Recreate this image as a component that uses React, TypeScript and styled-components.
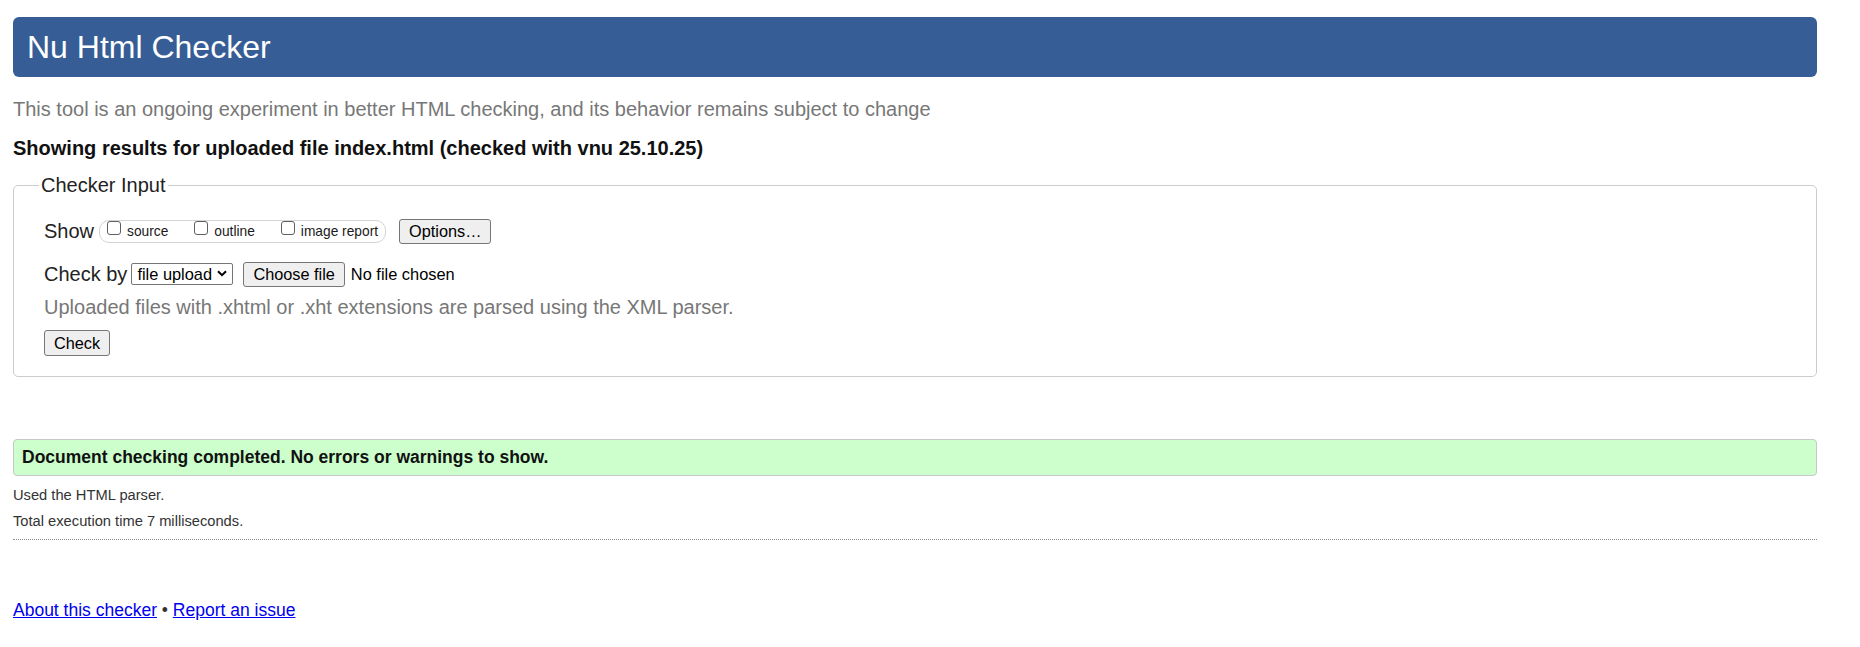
import React from 'react'
import styled, { createGlobalStyle } from 'styled-components'

const GlobalStyle = createGlobalStyle`
  html,
  body {
    margin: 0;
    background: #fff;
  }

  body {
    padding: 17px 43px 0 13px;
    font-family: 'Liberation Sans', Arial, Helvetica, sans-serif;
    color: #222;
  }
`

const Header = styled.h1`
  margin: 0;
  height: 60px;
  padding: 0 14px;
  border-radius: 6px;
  background-color: #365d95;
  color: #fff;
  font-size: 32px;
  font-weight: normal;
  line-height: 60px;
`

const Intro = styled.p`
  margin: 21px 0 0;
  font-size: 20px;
  line-height: 23px;
  color: #777;
`

const ResultsTitle = styled.h2`
  margin: 16px 0 0;
  font-size: 20px;
  font-weight: bold;
  line-height: 23px;
  color: #111;
`

const Fieldset = styled.fieldset`
  margin: 14px 0 0;
  padding: 0 24px 20px 30px;
  min-width: 0;
  border: 1px solid #ccc;
  border-radius: 5px;
  display: flex;
  flex-direction: column;
  align-items: flex-start;
`

const Legend = styled.legend`
  margin-left: -5px;
  padding: 0 2px;
  font-size: 20px;
  line-height: 23px;
  color: #222;
`

const Row = styled.div<{ top: number }>`
  display: flex;
  align-items: center;
  height: 26px;
  margin-top: ${({ top }) => top}px;
`

const RowLabel = styled.span<{ gap: number }>`
  margin-right: ${({ gap }) => gap}px;
  font-size: 20px;
  color: #222;
`

const OptionGroup = styled.div`
  display: flex;
  align-items: center;
  box-sizing: border-box;
  height: 23px;
  padding: 0 7px;
  border: 1px solid #d4d4d4;
  border-radius: 10px;
`

const Option = styled.label<{ last?: boolean }>`
  display: flex;
  align-items: center;
  align-self: stretch;
  margin-right: ${({ last }) => (last ? 0 : 26)}px;
  font-size: 13.75px;
  color: #1a1a1a;
`

const Checkbox = styled.input`
  appearance: none;
  align-self: flex-start;
  box-sizing: border-box;
  width: 14px;
  height: 14px;
  margin: 0 6px 0 0;
  border: 1px solid #5f5f5f;
  border-radius: 3px;
  background: #fff;
`

const Button = styled.button<{ height?: number }>`
  box-sizing: border-box;
  height: ${({ height }) => height ?? 25}px;
  padding: 0 9px;
  border: 1px solid #767676;
  border-radius: 3px;
  background-color: #efefef;
  color: #000;
  font-family: 'Liberation Sans', Arial, Helvetica, sans-serif;
  font-size: 16.3px;
  line-height: 1;
`

const OptionsButton = styled(Button)`
  margin-left: 13px;
`

const ChooseButton = styled(Button)`
  margin-left: 10px;
`

const CheckButton = styled(Button)`
  margin-top: 11px;
`

const SelectWrap = styled.div`
  position: relative;
  display: flex;
`

const Select = styled.select`
  appearance: none;
  box-sizing: border-box;
  width: 102px;
  height: 22px;
  padding: 0 0 0 5px;
  border: 1px solid #767676;
  border-radius: 2px;
  background-color: #fff;
  color: #000;
  font-family: 'Liberation Sans', Arial, Helvetica, sans-serif;
  font-size: 16.4px;
`

const Chevron = styled.svg`
  position: absolute;
  top: 7px;
  right: 6px;
  width: 10px;
  height: 7px;
  pointer-events: none;
`

const FileStatus = styled.span`
  margin-left: 6px;
  font-size: 16.4px;
  color: #000;
`

const Hint = styled.p`
  margin: 9px 0 0;
  font-size: 20px;
  line-height: 23px;
  color: #777;
`

const Success = styled.p`
  margin: 62px 0 0;
  padding: 7px 8px;
  border: 1px solid #c8c8c8;
  border-radius: 4px;
  background-color: #ccffcc;
  color: #111;
  font-size: 17.5px;
  font-weight: bold;
  line-height: 21px;
`

const Meta = styled.p<{ top: number }>`
  margin: ${({ top }) => top}px 0 0;
  font-size: 14.7px;
  line-height: 17px;
  color: #333;
`

const Divider = styled.hr`
  margin: 9px 0 0;
  height: 0;
  border: 0;
  border-top: 1px dotted #8a8a8a;
`

const Footer = styled.p`
  margin: 60px 0 0;
  font-size: 17.5px;
  line-height: 20px;
  color: #333;
`

const FooterLink = styled.a`
  color: #0000ee;
  text-decoration: underline;
`

export default function App() {
  return (
    <>
      <GlobalStyle />
      <Header>Nu Html Checker</Header>
      <Intro>
        This tool is an ongoing experiment in better HTML checking, and its behavior remains subject to change
      </Intro>
      <ResultsTitle>Showing results for uploaded file index.html (checked with vnu 25.10.25)</ResultsTitle>

      <Fieldset>
        <Legend>Checker Input</Legend>
        <Row top={21}>
          <RowLabel gap={5}>Show</RowLabel>
          <OptionGroup>
            <Option>
              <Checkbox type="checkbox" />
              source
            </Option>
            <Option>
              <Checkbox type="checkbox" />
              outline
            </Option>
            <Option last>
              <Checkbox type="checkbox" />
              image report
            </Option>
          </OptionGroup>
          <OptionsButton type="button">Options…</OptionsButton>
        </Row>
        <Row top={17}>
          <RowLabel gap={4}>Check by</RowLabel>
          <SelectWrap>
            <Select defaultValue="upload">
              <option value="address">address</option>
              <option value="upload">file upload</option>
              <option value="input">text input</option>
            </Select>
            <Chevron viewBox="0 0 10 7">
              <path d="M1 1.2 L5 5.2 L9 1.2" fill="none" stroke="#000" strokeWidth="2" />
            </Chevron>
          </SelectWrap>
          <ChooseButton type="button">Choose file</ChooseButton>
          <FileStatus>No file chosen</FileStatus>
        </Row>
        <Hint>Uploaded files with .xhtml or .xht extensions are parsed using the XML parser.</Hint>
        <CheckButton type="button" height={26}>
          Check
        </CheckButton>
      </Fieldset>

      <Success>Document checking completed. No errors or warnings to show.</Success>
      <Meta top={11}>Used the HTML parser.</Meta>
      <Meta top={9}>Total execution time 7 milliseconds.</Meta>
      <Divider />

      <Footer>
        <FooterLink href="#about">About this checker</FooterLink> •{' '}
        <FooterLink href="#issue">Report an issue</FooterLink>
      </Footer>
    </>
  )
}
